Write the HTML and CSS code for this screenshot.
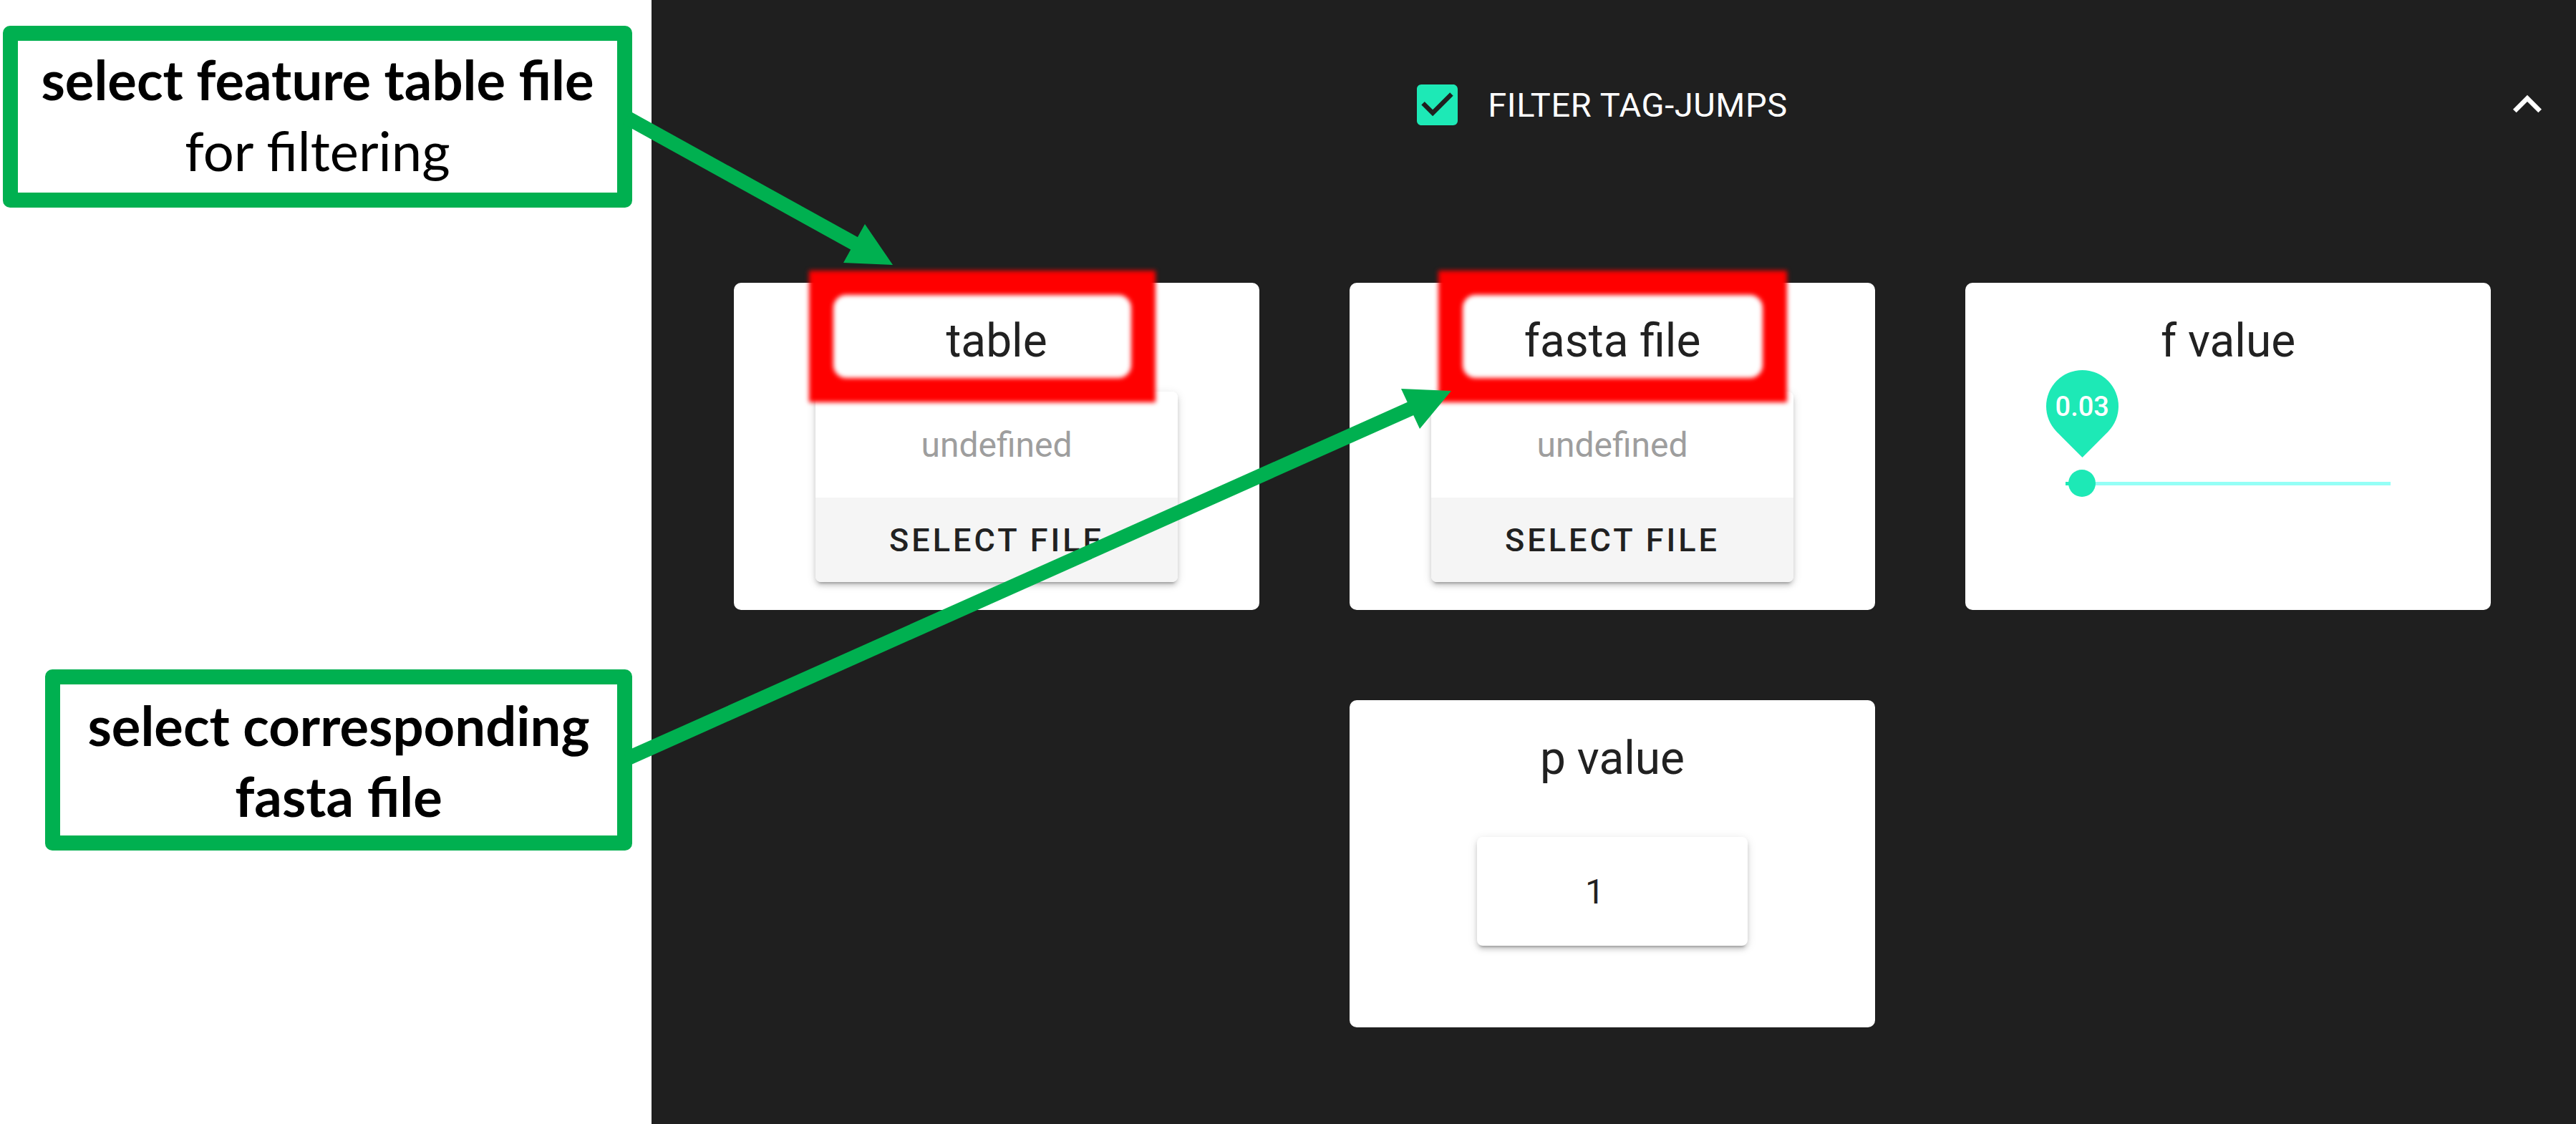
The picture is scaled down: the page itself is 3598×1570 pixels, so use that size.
FILE: index.html
```html
<!DOCTYPE html>
<html lang="en">
<head>
  <meta charset="UTF-8" />
  <meta name="viewport" content="width=device-width, initial-scale=1" />
  <title>Filter tag-jumps</title>
  <link rel="stylesheet" href="styles.css">
</head>
<body>
  <div class="notes">
    <div class="note note-table">
      <b>select feature table file</b>
      <span>for filtering</span>
    </div>
    <div class="note note-fasta">
      <b>select corresponding</b>
      <b>fasta file</b>
    </div>
  </div>

  <main class="panel">
    <header class="panel-head">
      <div class="toggle">
        <span class="check">
          <svg viewBox="3 3 18 18"><path d="M19 3H5c-1.11 0-2 .9-2 2v14c0 1.1.89 2 2 2h14c1.11 0 2-.9 2-2V5c0-1.1-.89-2-2-2zm-9 14l-5-5 1.41-1.41L10 14.17l7.59-7.59L19 8l-9 9z"/></svg>
        </span>
        <span class="toggle-text">FILTER TAG-JUMPS</span>
      </div>
      <svg class="chevron" viewBox="0 0 24 24"><path d="M12 8l-6 6 1.41 1.41L12 10.83l4.59 4.58L18 14z"/></svg>
    </header>

    <section class="cards">
      <div class="card">
        <div class="mark mark-table"></div>
        <h2 class="card-title">table</h2>
        <div class="file-pick">
          <div class="file-name">undefined</div>
          <div class="file-btn">SELECT FILE</div>
        </div>
      </div>

      <div class="card">
        <div class="mark mark-fasta"></div>
        <h2 class="card-title">fasta file</h2>
        <div class="file-pick">
          <div class="file-name">undefined</div>
          <div class="file-btn">SELECT FILE</div>
        </div>
      </div>

      <div class="card">
        <h2 class="card-title">f value</h2>
        <div class="slider">
          <div class="slider-track"></div>
          <div class="slider-fill"></div>
          <div class="slider-thumb"></div>
          <div class="thumb-label"><span>0.03</span></div>
        </div>
      </div>

      <div class="card">
        <h2 class="card-title">p value</h2>
        <div class="number-box">1</div>
      </div>
    </section>
  </main>

  <!-- annotation arrows -->
  <svg class="arrows" viewBox="0 0 3598 1570">
    <line x1="875" y1="164" x2="1195" y2="341" />
    <polygon points="1208,313 1247,370 1178,367" />
    <line x1="875" y1="1060" x2="1972" y2="570" />
    <polygon points="1957,543 2027,546 1983,599" />
  </svg>
</body>
</html>
```

FILE: styles.css
```css
* {
  margin: 0;
  padding: 0;
  box-sizing: border-box;
}
html, body {
  width: 3598px;
  height: 1570px;
  overflow: hidden;
  background: #fff;
}
body {
  position: relative;
  display: flex;
  font-family: Roboto, "Liberation Sans", sans-serif;
}

/* left annotation column */
.notes {
  width: 910px;
  flex-shrink: 0;
  background: #fff;
  display: flex;
  flex-direction: column;
  align-items: flex-start;
}
.note {
  border: 21px solid #00b050;
  border-radius: 10px;
  background: #fff;
  display: flex;
  flex-direction: column;
  align-items: center;
  justify-content: center;
  font-family: Lato, "Open Sans", sans-serif;
  font-size: 76px;
  line-height: 99px;
  color: #000;
  text-align: center;
}
.note b {
  font-weight: 700;
}
.note span {
  font-weight: 400;
}
.note-table {
  width: 879px;
  height: 254px;
  margin: 36px 0 0 4px;
  padding-bottom: 7px;
}
.note-fasta {
  width: 820px;
  height: 253px;
  margin: 645px 0 0 63px;
}

/* dark panel */
.panel {
  flex: 1;
  background: #1f1f1f;
  padding-top: 86px;
}
.panel-head {
  height: 120px;
  display: flex;
  align-items: center;
  padding: 0 48px 0 76px;
}
.toggle {
  flex: 1;
  display: flex;
  align-items: center;
  justify-content: center;
  gap: 42px;
}
.check {
  width: 57px;
  height: 57px;
  display: block;
}
.check svg {
  width: 57px;
  height: 57px;
  display: block;
  fill: #1de9b6;
}
.toggle-text {
  color: #fff;
  font-size: 47px;
  font-weight: 400;
  letter-spacing: 0.6px;
}
.chevron {
  width: 80px;
  height: 80px;
  margin-right: -20px;
  fill: #fff;
}

.cards {
  margin-top: 189px;
  display: flex;
  flex-wrap: wrap;
  justify-content: center;
  gap: 126px;
  padding: 0 104px 0 100px;
}
.card {
  position: relative;
  width: 734px;
  height: 457px;
  background: #fff;
  border-radius: 10px;
  display: flex;
  flex-direction: column;
  align-items: center;
  padding-top: 44px;
}
.card-title {
  font-size: 64px;
  font-weight: 400;
  line-height: 75px;
  color: #212121;
}

/* file picker */
.file-pick {
  margin-top: 33px;
  width: 506px;
  border-radius: 8px;
  overflow: hidden;
  box-shadow: 0 6px 3px -4px rgba(0,0,0,.2), 0 5px 6px rgba(0,0,0,.14), 0 3px 14px rgba(0,0,0,.12);
}
.file-name {
  height: 148px;
  display: flex;
  align-items: center;
  justify-content: center;
  background: #fff;
  color: #9e9e9e;
  font-size: 48px;
}
.file-btn {
  height: 118px;
  display: flex;
  align-items: center;
  justify-content: center;
  background: #f5f5f5;
  color: #212121;
  font-size: 45px;
  font-weight: 500;
  letter-spacing: 4px;
}

/* red highlight frames */
.mark {
  position: absolute;
  top: -17px;
  height: 184px;
  border: 34px solid #f00;
  filter: blur(3px);
  z-index: 2;
}
.mark::after {
  content: "";
  position: absolute;
  inset: 0;
  border-radius: 18px;
  box-shadow: 0 0 0 20px #f00;
}
.mark-table {
  left: 105px;
  width: 484px;
}
.mark-fasta {
  left: 124px;
  width: 487px;
}

/* slider */
.slider {
  position: relative;
  width: 454px;
  height: 200px;
  margin-top: 3px;
}
.slider-track {
  position: absolute;
  left: 0;
  right: 0;
  top: 156px;
  height: 5px;
  background: #94fff6;
}
.slider-fill {
  position: absolute;
  left: 0;
  width: 23px;
  top: 156px;
  height: 5px;
  background: #1de9b6;
}
.slider-thumb {
  position: absolute;
  left: 4px;
  top: 139px;
  width: 38px;
  height: 38px;
  border-radius: 50%;
  background: #1de9b6;
}
.thumb-label {
  position: absolute;
  left: -27px;
  top: 0;
  width: 101px;
  height: 101px;
  border-radius: 50% 50% 0 50%;
  background: #1de9b6;
  transform: rotate(45deg);
  transform-origin: 50% 50%;
  display: flex;
  align-items: center;
  justify-content: center;
}
.thumb-label span {
  transform: rotate(-45deg);
  color: #fff;
  font-size: 38px;
  font-weight: 500;
}

/* number input */
.number-box {
  margin-top: 72px;
  width: 378px;
  height: 152px;
  border-radius: 8px;
  background: #fff;
  box-shadow: 0 6px 3px -4px rgba(0,0,0,.2), 0 5px 6px rgba(0,0,0,.14), 0 3px 14px rgba(0,0,0,.12);
  display: flex;
  align-items: center;
  padding-left: 151px;
  font-size: 48px;
  color: #212121;
}

/* arrows overlay */
.arrows {
  position: absolute;
  top: 0;
  left: 0;
  width: 3598px;
  height: 1570px;
  pointer-events: none;
  z-index: 5;
}
.arrows line {
  stroke: #00b050;
  stroke-width: 20;
}
.arrows polygon {
  fill: #00b050;
}
```
